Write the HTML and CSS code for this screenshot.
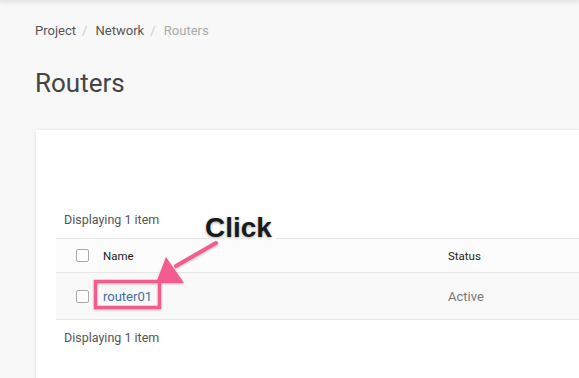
FILE: index.html
```html
<!DOCTYPE html>
<html>
<head>
<meta charset="utf-8">
<link rel="stylesheet" href="styles.css">
</head>
<body>
<div class="topbar"></div>
<main class="page">
  <nav class="crumbs">
    <span class="crumb">Project</span><span class="sep">/</span>
    <span class="crumb">Network</span><span class="sep">/</span>
    <span class="crumb current">Routers</span>
  </nav>
  <h1 class="title">Routers</h1>
  <section class="panel">
    <div class="count">Displaying 1 item</div>
    <div class="table">
      <div class="row head">
        <div class="cell check"><span class="box"></span></div>
        <div class="cell name">Name</div>
        <div class="cell status">Status</div>
      </div>
      <div class="row data">
        <div class="cell check"><span class="box"></span></div>
        <div class="cell name"><a class="link">router01</a></div>
        <div class="cell status muted">Active</div>
      </div>
    </div>
    <div class="count foot">Displaying 1 item</div>
  </section>
</main>
<svg class="overlay" width="579" height="378" viewBox="0 0 579 378">
  <defs>
    <filter id="sh" x="-20%" y="-20%" width="140%" height="140%">
      <feDropShadow dx="0" dy="1" stdDeviation="1" flood-color="#000" flood-opacity="0.25"/>
    </filter>
  </defs>
  <g filter="url(#sh)">
    <rect x="95.5" y="281.5" width="64" height="26" fill="none" stroke="#f45b91" stroke-width="3.5"/>
    <line x1="216" y1="243" x2="176" y2="266" stroke="#f45b91" stroke-width="4" stroke-linecap="round"/>
    <polygon points="156,283 166,257 184,283" fill="#f45b91"/>
  </g>
</svg>
<div class="callout">Click</div>
</body>
</html>
```
FILE: styles.css
```css
html, body {
  margin: 0;
  padding: 0;
}
body {
  width: 579px;
  height: 378px;
  overflow: hidden;
  background: #f8f8f8;
  font-family: Roboto, "Liberation Sans", sans-serif;
  color: #333;
  position: relative;
}
.topbar {
  height: 0;
  box-shadow: 0 0 5px 2px rgba(0,0,0,0.12);
}
.page {
  padding-left: 35px;
}
.crumbs {
  padding-top: 22px;
  font-size: 13px;
  line-height: 18px;
  color: #555;
}
.sep {
  color: #ccc;
  margin: 0 5px 0 6px;
}
.crumb.current {
  color: #aaa;
}
.title {
  margin: 0;
  padding-top: 28px;
  font-size: 26px;
  line-height: 30px;
  font-weight: 400;
  color: #444;
}
.panel {
  margin-top: 32px;
  margin-left: 1px;
  height: 260px;
  background: #fff;
  box-shadow: 0 0 3px rgba(0,0,0,0.12);
  padding: 82px 0 0 20px;
  box-sizing: border-box;
}
.count {
  font-size: 12.5px;
  line-height: 16px;
  color: #555;
  padding-left: 8px;
  margin-bottom: 10px;
}
.count.foot {
  margin-top: 10px;
}
.table {
  border-top: 1px solid #e6e6e6;
  border-bottom: 1px solid #e6e6e6;
}
.row {
  display: flex;
  align-items: center;
}
.row.head {
  height: 33px;
  background: #fcfcfc;
  border-bottom: 1px solid #e6e6e6;
  font-size: 11.5px;
  color: #222;
}
.row.data {
  height: 46px;
  background: #f9f9f9;
  font-size: 13px;
}
.cell.check {
  width: 47px;
  padding-left: 20px;
  box-sizing: border-box;
  display: flex;
}
.box {
  width: 11px;
  height: 11px;
  border: 1px solid #aaa;
  border-radius: 2px;
  background: #fff;
}
.cell.name {
  width: 345px;
}
.link {
  color: #3d6fa6;
}
.muted {
  color: #777;
}
.overlay {
  position: absolute;
  left: 0;
  top: 0;
}
.callout {
  position: absolute;
  left: 205px;
  top: 212px;
  font-family: "Liberation Sans", Arial, sans-serif;
  font-weight: 700;
  font-size: 28px;
  line-height: 32px;
  color: #1a1a1a;
  -webkit-text-stroke: 5px #fff;
  paint-order: stroke fill;
  text-shadow: 0 1px 3px rgba(0,0,0,0.35);
}
```
